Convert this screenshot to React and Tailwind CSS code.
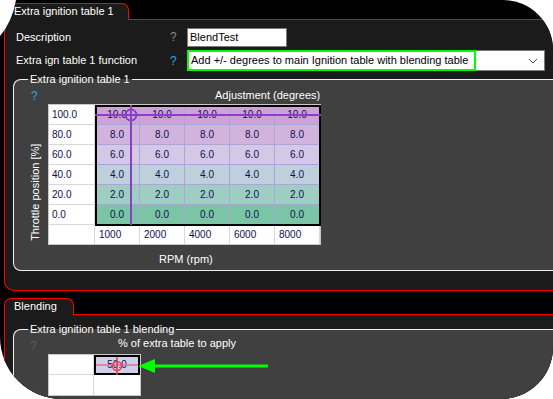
import React from 'react';

const FONT = { fontFamily: '"Liberation Sans", Arial, sans-serif' };

const rows = [
  { y: '100.0', v: '10.0', bg: 'bg-[#cfa2d7]' },
  { y: '80.0', v: '8.0', bg: 'bg-[#d2b3de]' },
  { y: '60.0', v: '6.0', bg: 'bg-[#d5c8e6]' },
  { y: '40.0', v: '4.0', bg: 'bg-[#bdd0dc]' },
  { y: '20.0', v: '2.0', bg: 'bg-[#9ecdc2]' },
  { y: '0.0', v: '0.0', bg: 'bg-[#79c5a5]' },
];
const rpm = ['1000', '2000', '4000', '6000', '8000'];

// a tab head sitting on a red-bordered page
const TabHead = ({ label, width }) => (
  <div className="flex items-end h-[17px]">
    <div className={`${width} h-[17px] border-t border-l border-r border-[#ff0000] rounded-t-[7px] bg-[#1b1b1b] text-white text-[11px] leading-[15px] pl-[9px]`}>
      {label}
    </div>
    <div className="flex-1 h-[6px] border-b border-[#ff0000]" />
  </div>
);

const Group = ({ legend, className, children }) => (
  <fieldset className={`border-t border-l border-b border-[#f0f0f0] rounded-l-[8px] bg-[#404040] ${className}`}>
    <legend className="ml-[14px] px-[2px] text-white text-[11px] leading-[13px]">{legend}</legend>
    {children}
  </fieldset>
);

const IgnitionTable = () => (
  <div className="relative w-fit bg-white border border-[#c8c8c8]">
    {rows.map((r, i) => (
      <div key={i} className="flex h-[20px]">
        <div className="w-[46px] border-r border-b border-[#d8d8d8] pl-[3px] text-[10px] leading-[19px] text-[#101050]">{r.y}</div>
        {rpm.map((c, j) => (
          <div key={j} className={`w-[45px] border-r border-b border-[#aca6d8] ${r.bg} text-center text-[10px] leading-[19px] text-[#101050]`}>{r.v}</div>
        ))}
      </div>
    ))}
    <div className="flex h-[19px]">
      <div className="w-[46px] border-r border-[#d8d8d8]" />
      {rpm.map((c) => (
        <div key={c} className="w-[45px] border-r border-[#d8d8d8] pl-[4px] text-[10px] leading-[19px] text-[#101050]">{c}</div>
      ))}
    </div>
    {/* black outline of the value area */}
    <div className="absolute left-[46px] top-0 w-[226px] h-[121px] border-2 border-black pointer-events-none" />
    {/* live position cursor */}
    <svg className="absolute left-[46px] top-0 pointer-events-none" width="226" height="121">
      <line x1="0" y1="10" x2="226" y2="10" stroke="#8a3fc4" strokeWidth="2" />
      <line x1="36" y1="0" x2="36" y2="120" stroke="#8a3fc4" strokeWidth="2" />
      <circle cx="36" cy="10" r="5.5" fill="none" stroke="#8a3fc4" strokeWidth="2" />
    </svg>
  </div>
);

const BlendTable = () => (
  <div className="relative w-fit bg-white border border-[#c8c8c8]">
    <div className="flex h-[20px]">
      <div className="w-[45px] border-r border-b border-[#d8d8d8]" />
      <div className="w-[46px] bg-[#cfcfec] border-2 border-black text-center text-[10px] leading-[16px] text-[#101050]">50.0</div>
    </div>
    <div className="flex h-[20px]">
      <div className="w-[45px] border-r border-[#d8d8d8]" />
      <div className="w-[46px]" />
    </div>
    <svg className="absolute left-[45px] top-0 pointer-events-none" width="46" height="20">
      <line x1="2" y1="10" x2="44" y2="10" stroke="#e8707a" strokeWidth="1.5" />
      <line x1="23" y1="2" x2="23" y2="20" stroke="#e04050" strokeWidth="1.5" />
      <circle cx="23" cy="11" r="4.5" fill="none" stroke="#e04050" strokeWidth="1.5" />
    </svg>
    {/* annotation arrow */}
    <svg className="absolute left-[89px] top-[1px] pointer-events-none" width="132" height="20">
      <line x1="14" y1="10" x2="130" y2="10" stroke="#00ff00" strokeWidth="3" />
      <polygon points="0,10 17,3 17,17" fill="#00ff00" />
    </svg>
  </div>
);

export default function App() {
  return (
    <div className="relative w-[553px] h-[399px] bg-white overflow-hidden" style={FONT}>
      <div className="w-full h-full bg-black overflow-hidden rounded-tl-[6px] rounded-tr-[50px] rounded-br-[52px] rounded-bl-[62px] pt-[3px] pl-[4px]">
        {/* Extra ignition table page */}
        <TabHead label="Extra ignition table 1" width="w-[125px]" />
        <div className="w-[570px] h-[271px] border-l border-b border-[#ff0000] rounded-bl-[10px] bg-[#1b1b1b] pt-[7px]">
          <div className="flex items-center h-[20px] text-[11px]">
            <span className="w-[165px] pl-[11px] text-white">Description</span>
            <span className="w-[17px] text-[#8a8a8a] text-[12px]">?</span>
            <div className="w-[100px] h-[19px] bg-white border border-[#7a7a7a] pl-[2px] leading-[17px] text-black">BlendTest</div>
          </div>
          <div className="flex items-center h-[21px] mt-[3px] text-[11px]">
            <span className="w-[165px] pl-[11px] text-white">Extra ign table 1 function</span>
            <span className="w-[17px] text-[#2aa6ee] text-[12px]">?</span>
            <div className="w-[358px] h-[21px] bg-white border border-[#7a7a7a] flex items-center">
              <div className="w-[289px] h-[21px] -ml-px -mt-px border-[2px] border-[#00ff00] pl-[2px] leading-[17px] text-black">
                Add +/- degrees to main Ignition table with blending table
              </div>
              <div className="flex-1" />
              <svg width="10" height="6" className="mr-[6px]" viewBox="0 0 10 6">
                <path d="M1 1 L5 5 L9 1" fill="none" stroke="#555" strokeWidth="1" />
              </svg>
            </div>
          </div>

          <Group legend="Extra ignition table 1" className="ml-[8px] mt-[2px] h-[198px]">
            <div className="flex items-center h-[17px] mt-[1px]">
              <span className="pl-[17px] w-[201px] text-[#2aa6ee] text-[12px]">?</span>
              <span className="text-white text-[11px]">Adjustment (degrees)</span>
            </div>
            <div className="flex">
              <div className="w-[34px] h-[140px] pl-[9px] flex items-center justify-center">
                <span className="-rotate-90 whitespace-nowrap text-white text-[11px] mt-[36px]">Throttle position [%]</span>
              </div>
              <div className="flex flex-col">
                <IgnitionTable />
                <div className="text-white text-[11px] pl-[111px] mt-[6px]">RPM (rpm)</div>
              </div>
            </div>
          </Group>
        </div>

        {/* Blending page */}
        <div className="mt-[7px]">
          <TabHead label="Blending" width="w-[70px]" />
          <div className="w-[570px] h-[90px] border-l border-[#ff0000] bg-[#1b1b1b] pt-[8px]">
            <Group legend="Extra ignition table 1 blending" className="ml-[8px] h-[90px]">
              <div className="flex items-center h-[17px]">
                <span className="pl-[16px] w-[104px] text-[#5c5c5c] text-[12px] mt-[3px]">?</span>
                <span className="text-white text-[11px] -mt-[3px]">% of extra table to apply</span>
              </div>
              <div className="pl-[34px] mt-[1px]">
                <BlendTable />
              </div>
            </Group>
          </div>
        </div>
      </div>
      {/* clipped corner of the captured window */}
      <svg className="absolute left-0 top-0 pointer-events-none" width="18" height="38">
        <path d="M0 0 H16 Q12 22 0 36 Z" fill="#ffffff" />
      </svg>
    </div>
  );
}
